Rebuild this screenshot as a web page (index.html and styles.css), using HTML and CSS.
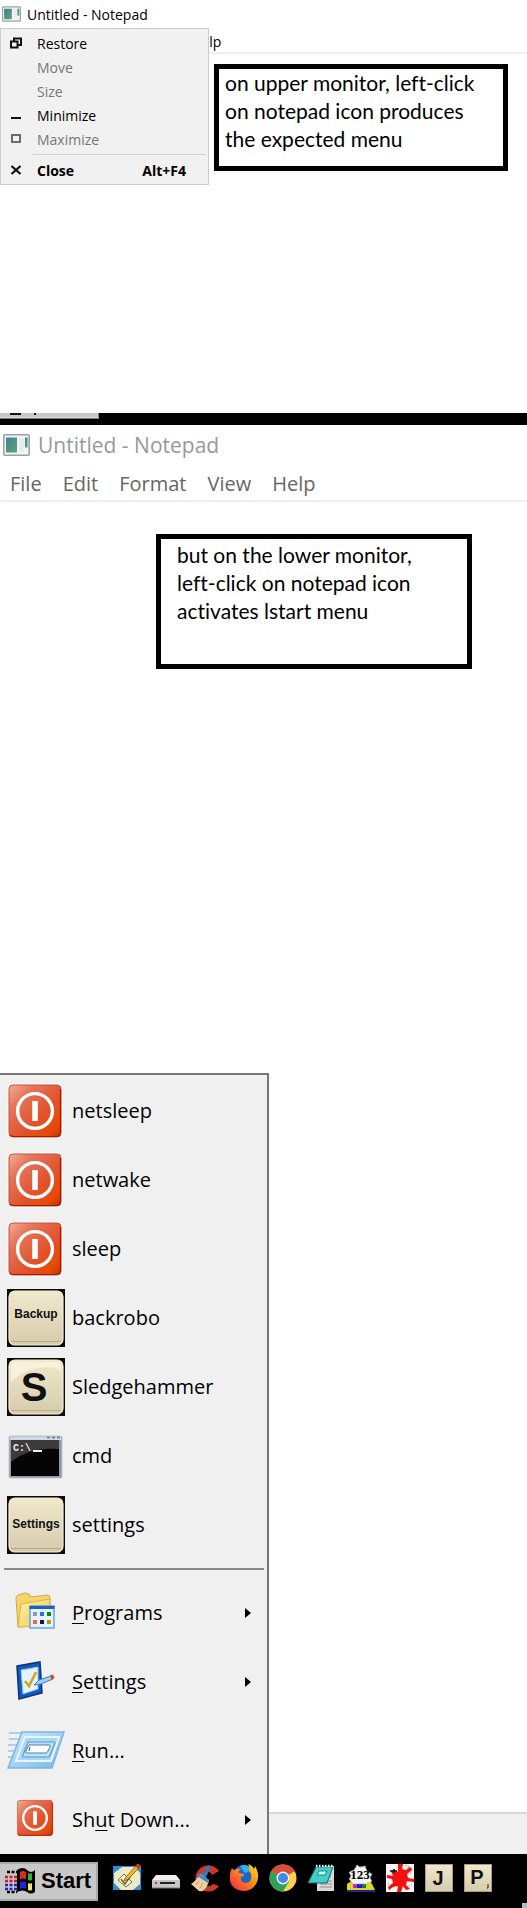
FILE: index.html
```html
<!DOCTYPE html>
<html lang="en">
<head>
<meta charset="utf-8">
<title>Untitled - Notepad</title>
<link rel="stylesheet" href="styles.css">
</head>
<body>
<svg class="defs" aria-hidden="true">
  <defs>
    <linearGradient id="red" x1="0" y1="0" x2="1" y2="1">
      <stop offset="0" stop-color="#f5ad99"/><stop offset=".25" stop-color="#e4755a"/><stop offset=".6" stop-color="#e2522c"/><stop offset=".85" stop-color="#e64a06"/><stop offset="1" stop-color="#c43000"/>
    </linearGradient>
    <linearGradient id="tile" x1="0" y1="0" x2="0" y2="1">
      <stop offset="0" stop-color="#f1e8cd"/><stop offset="1" stop-color="#d6cbac"/>
    </linearGradient>
    <linearGradient id="teal" x1="0" y1="0" x2="1" y2="1">
      <stop offset="0" stop-color="#3f8296"/><stop offset="1" stop-color="#58a873"/>
    </linearGradient>
    <linearGradient id="folder" x1="0" y1="0" x2="1" y2="1">
      <stop offset="0" stop-color="#fff4a8"/><stop offset="1" stop-color="#efc452"/>
    </linearGradient>
    <linearGradient id="sky" x1="0" y1="0" x2="1" y2="1">
      <stop offset="0" stop-color="#d5edfb"/><stop offset="1" stop-color="#6fb9ea"/>
    </linearGradient>
    <linearGradient id="fox" x1="1" y1="0" x2="0" y2="1">
      <stop offset="0" stop-color="#ffe226"/><stop offset=".45" stop-color="#ff8a16"/><stop offset="1" stop-color="#f0204e"/>
    </linearGradient>
    <symbol id="app" viewBox="0 0 27 22">
      <rect x=".8" y=".8" width="25.4" height="20.4" rx="1" fill="#f3f4f6" stroke="#9aa1ab" stroke-width="1.6"/>
      <rect x="3" y="3.5" width="11" height="15" fill="url(#teal)"/>
      <rect x="16" y="4" width="5" height="14" fill="#e9ebee"/>
      <rect x="22" y="3.5" width="2.6" height="10" fill="url(#teal)"/>
    </symbol>
    <symbol id="power" viewBox="0 0 56 56">
      <rect x="0" y="0" width="56" height="56" rx="6" fill="#fafafa"/>
      <rect x="2" y="2" width="52" height="52" rx="4" fill="url(#red)" stroke="#c9513a"/>
      <path d="M3 52q1 1.500 4 1.500h42q4.500 0 4.500-4.500V6" fill="none" stroke="#a51a00" stroke-width="1.200"/>
      <circle cx="28" cy="28" r="17.4" fill="none" stroke="#fff" stroke-width="3.4"/>
      <rect x="25.2" y="18" width="5.6" height="20" fill="#fff"/>
    </symbol>
    <symbol id="keycap" viewBox="0 0 58 58">
      <rect width="58" height="58" fill="#0b0b08"/>
      <rect x="2" y="2" width="54" height="54" rx="6" fill="url(#tile)" stroke="#f6efd6" stroke-width="1.2"/>
      <path d="M4 52.5h50" stroke="#b5ab8d"/>
    </symbol>
  </defs>
</svg>

<main class="desktop">
  <section class="window window-upper">
    <header class="titlebar">
      <svg class="app-icon"><use href="#app"/></svg>
      <h1 class="title">Untitled - Notepad</h1>
    </header>
    <nav class="menubar">
      <button>Help</button>
    </nav>
    <p class="note note-upper">on upper monitor, left-click<br>on notepad icon produces<br>the expected menu</p>

    <div class="sysmenu" role="menu">
      <button class="sysitem" role="menuitem">
        <svg viewBox="0 0 12 12"><path d="M1 4.500h6.500v6H1zM4 4V1.500h7V8H8" fill="none" stroke="#111" stroke-width="2"/></svg>
        <span>Restore</span>
      </button>
      <button class="sysitem" role="menuitem" disabled><span class="blank"></span><span>Move</span></button>
      <button class="sysitem" role="menuitem" disabled><span class="blank"></span><span>Size</span></button>
      <button class="sysitem" role="menuitem">
        <svg viewBox="0 0 12 12"><path d="M1 9h10" stroke="#111" stroke-width="2"/></svg>
        <span>Minimize</span>
      </button>
      <button class="sysitem" role="menuitem" disabled>
        <svg viewBox="0 0 12 12"><path d="M2 2h8v7H2z" fill="none" stroke="#6d6d6d" stroke-width="2"/></svg>
        <span>Maximize</span>
      </button>
      <hr class="sysline">
      <button class="sysitem sysclose" role="menuitem">
        <svg viewBox="0 0 12 12"><path d="M1.500 2l9 8M10.500 2l-9 8" stroke="#111" stroke-width="2.200"/></svg>
        <span>Close</span><span class="shortcut">Alt+F4</span>
      </button>
    </div>
  </section>

  <div class="divider">
    <svg class="divider-button" viewBox="0 0 99 6"><path d="M0 0h98v5H0z" fill="#c8c8c8"/><path d="M0 5h99V0" fill="none" stroke="#eee"/><path d="M10 1h11M13 0h5M35 0v2" stroke="#111" stroke-width="2"/></svg>
  </div>

  <section class="window window-lower">
    <header class="titlebar">
      <svg class="app-icon"><use href="#app"/></svg>
      <h2 class="title">Untitled - Notepad</h2>
    </header>
    <nav class="menubar">
      <button>File</button><button>Edit</button><button>Format</button><button>View</button><button>Help</button>
    </nav>
    <p class="note note-lower">but on the lower monitor,<br>left-click on notepad icon<br>activates lstart menu</p>
    <footer class="statusbar"></footer>

    <div class="startmenu" role="menu">
      <button class="startitem" role="menuitem"><svg class="pic" viewBox="0 0 58 58"><use href="#power" x="0" y="1" width="56" height="56"/></svg><span>netsleep</span></button>
      <button class="startitem" role="menuitem"><svg class="pic" viewBox="0 0 58 58"><use href="#power" x="0" y="1" width="56" height="56"/></svg><span>netwake</span></button>
      <button class="startitem" role="menuitem"><svg class="pic" viewBox="0 0 58 58"><use href="#power" x="0" y="1" width="56" height="56"/></svg><span>sleep</span></button>
      <button class="startitem" role="menuitem"><svg class="pic" viewBox="0 0 58 58"><use href="#keycap" width="58" height="58"/><text class="cap cap-word" x="29" y="29">Backup</text></svg><span>backrobo</span></button>
      <button class="startitem" role="menuitem"><svg class="pic" viewBox="0 0 58 58"><use href="#keycap" width="58" height="58"/><path d="M4 24Q28 2 54 12V8q0-4-4-4H8Q4 4 4 8z" fill="#fffbe9" opacity=".6"/><text class="cap cap-letter" x="27" y="43">S</text></svg><span>Sledgehammer</span></button>
      <button class="startitem" role="menuitem">
        <svg class="pic" viewBox="0 0 58 58">
          <rect x="2" y="9" width="53" height="42" rx="1.500" fill="#8e97a5" stroke="#c3c8d0"/>
          <rect x="3" y="9.500" width="51" height="3.500" fill="#cfd8e6"/>
          <path d="M40 10.500h3M45 10.500h3M50 10.500h3" stroke="#68758b" stroke-width="1.500"/>
          <rect x="4" y="13" width="48" height="36" fill="#050505"/>
          <path d="M4 13h48v9Q22 20 4 35z" fill="#3b3b3b"/>
          <text class="prompt" x="6" y="24">C:\</text>
          <path d="M26 24h9" stroke="#eee" stroke-width="2"/>
        </svg><span>cmd</span></button>
      <button class="startitem" role="menuitem"><svg class="pic" viewBox="0 0 58 58"><use href="#keycap" width="58" height="58"/><text class="cap cap-word" x="29" y="32">Settings</text></svg><span>settings</span></button>
      <hr class="startline">
      <button class="startitem" role="menuitem">
        <svg class="pic" viewBox="0 0 58 58">
          <path d="M11 43L9 14q0-2 2-3l7-2 4 1 2 3 16-2q3 0 3 3v27z" fill="#f4d56c" stroke="#d6a83a"/>
          <path d="M11 43l3-23 29-5v4l-3 23z" fill="url(#folder)" stroke="#dfb348"/>
          <rect x="23" y="22" width="24" height="22" fill="#e8f2fe" stroke="#4d9be4" stroke-width="1.300"/>
          <path d="M22.500 23.500h25" stroke="#1b5fc9" stroke-width="3"/>
          <g stroke-width="4"><path d="M26 30h4" stroke="#9b90c8"/><path d="M33 30h4" stroke="#1c78dc"/><path d="M40 30h4" stroke="#10850f"/><path d="M26 38h4" stroke="#f06a38"/><path d="M33 38h4" stroke="#10107c"/><path d="M40 38h4" stroke="#c5960c"/></g>
        </svg><span><u>P</u>rograms</span><svg class="arrow" viewBox="0 0 6 10"><path d="M0 0l6 5-6 5z"/></svg></button>
      <button class="startitem" role="menuitem">
        <svg class="pic" viewBox="0 0 58 58">
          <path d="M10 13l23-4 2 31-23 6z" fill="#1258bd" stroke="#08357e" stroke-width="1.500"/>
          <path d="M14 17l17-3v22l-15 5z" fill="#e6f2ff" stroke="#8cc0f5"/>
          <path d="M18 28l4 5 7-14" fill="none" stroke="#d4a419" stroke-width="2.600"/>
          <path d="M27 32l5-5 12-4 2 3-12 5z" fill="#9bcdf5" stroke="#3f80c2"/>
          <path d="M43 22.500l3-1 1.500 3.500-3 1.500z" fill="#d6452a"/>
        </svg><span><u>S</u>ettings</span><svg class="arrow" viewBox="0 0 6 10"><path d="M0 0l6 5-6 5z"/></svg></button>
      <button class="startitem" role="menuitem">
        <svg class="pic" viewBox="0 0 58 58">
          <path d="M2 11h14M2 17h11M1 23h10M1 29h8M1 35h6" stroke="#a9d2f0" stroke-width="2"/>
          <path d="M15 10h42L45 46H1z" fill="url(#sky)" stroke="#80b4dd" stroke-width="1.500"/>
          <path d="M18 15h34l-8 24H9z" fill="#a9d8f7" stroke="#e9f6fe" stroke-width="2"/>
          <path d="M21 20h26q1 0 1 1l-5 12q-1 2-2 2H17q-2 0-1-2z" fill="#bfe0f9" stroke="#5c97cb" stroke-width="1.200"/>
          <path d="M22 23h20q2 0 1 2l-2 4q-1 2-2 2H20q-2 0-1-2z" fill="#fff" stroke="#517aa6"/>
          <path d="M23 25l-1 4" stroke="#555"/>
        </svg><span><u>R</u>un...</span></button>
      <button class="startitem" role="menuitem"><svg class="pic" viewBox="0 0 58 58"><use href="#power" x="9" y="8" width="38" height="38"/></svg><span>Sh<u>u</u>t Down...</span><svg class="arrow" viewBox="0 0 6 10"><path d="M0 0l6 5-6 5z"/></svg></button>
    </div>
  </section>

  <footer class="taskbar">
    <button class="startbutton">
      <svg class="flag" viewBox="0 0 32 28">
        <path d="M12 3q6-4 10 0t8 0v22q-4 3-8 0t-10 0z" fill="#000"/>
        <path d="M15 5q3-2 6 0v7q-3-1-6 0z" fill="#e22a1c"/><path d="M23 6q2 1 4 0v7q-2 1-4 0z" fill="#36b336"/>
        <path d="M15 15q3-1 6 0v7q-3-2-6 0z" fill="#2424e0"/><path d="M23 16q2 1 4 0v7q-2 1-4 0z" fill="#efe65c"/>
        <g stroke-width="2.500" stroke-dasharray="3 1.500"><path d="M2 5h10M2 25h10" stroke="#000"/><path d="M0 10h12M0 14h12" stroke="#c81e2c"/><path d="M0 18h12M0 22h12" stroke="#2222c4"/></g>
      </svg>
      <span>Start</span>
    </button>
    <div class="quicklaunch">
      <button aria-label="Notes"><svg viewBox="0 0 28 28">
        <path d="M0 2h28v24H0z" fill="#2d8edb"/><path d="M9 3h13l5 6v11l-7 6H8l-7-7V9z" fill="#eee9c5"/><path d="M5 16l6-6 8 8-6 5z" fill="#f9f6df" stroke="#706c55"/><path d="M8 15l4 5 11-16" fill="none" stroke="#6f6123" stroke-width="1.500"/><path d="M12 14L23 2l3 2-11 11-4 2z" fill="#f2bd24" stroke="#79520c" stroke-width=".8"/><path d="M22 2l3-3 3 3-3 3z" fill="#d3311f"/></svg></button>
      <button aria-label="Drive"><svg viewBox="0 0 28 28">
        <path d="M4 11h20l4 5H0z" fill="#f2f2f2"/><path d="M0 16h28v8H0z" fill="#c6c6c6"/><path d="M8 19h15" stroke="#222" stroke-width="2"/><path d="M3 19h2" stroke="#c33" stroke-width="2"/><path d="M0 24h28" stroke="#777"/></svg></button>
      <button aria-label="CCleaner"><svg viewBox="0 0 28 28">
        <path d="M28 7A13 13 0 1 0 28 22l-6-2q-4 4-8 1-4-3-3-8 2-7 8-5l2 3z" fill="#cf3528"/><path d="M17 1l3 2-5 10 1 2-7-5 4-2z" fill="#2d7bb8"/><path d="M9 10l9 6q-1 6-5 10-2 2-5 1L0 20q5-3 9-10z" fill="#efcfa0"/><path d="M8 10l10 6-1 3-11-7z" fill="#3c8bc2"/><path d="M5 21l3-4M9 24l3-5" stroke="#c59a63"/></svg></button>
      <button aria-label="Firefox"><svg viewBox="0 0 28 28">
        <circle cx="14" cy="13" r="12" fill="#1b65c9"/><path d="M10 2q7-3 12 4l-7 3z" fill="#31b4ee"/><path d="M2 4q1 2 3 2 3-2 6-1-3 2-2 4l5 1q1 2-3 3-1 5 4 6 5 0 6-4 1-5-2-8 1-5-1-7 4 1 6 5l1-3q5 8 2 16-4 9-13 9T1 20Q-2 12 2 4z" fill="url(#fox)"/></svg></button>
      <button aria-label="Chrome"><svg viewBox="0 0 28 28">
        <circle cx="14" cy="14" r="13.500" fill="#fdd04b"/><path d="M14 14L2.300 7.300A13.500 13.500 0 0 0 14 27.500L20 17.500z" fill="#2ea358"/><path d="M14 14L2.300 7.300a13.500 13.500 0 0 1 23.400 0z" fill="#dc4a3b"/><path d="M14 8h12.200l-.5-.7H14z" fill="#dc4a3b"/><circle cx="14" cy="14" r="6.500" fill="#f3f3f3"/><circle cx="14" cy="14" r="5" fill="#4488ef"/></svg></button>
      <button aria-label="Notepad"><svg viewBox="0 0 28 28">
        <path d="M15 2h11v25H9V14z" fill="#dadada"/><path d="M12 17h12M12 20h12M12 23h12M22 8v6" stroke="#8d8d8d"/><path d="M8 3h17l-6 16H0z" fill="#3fd0c8" stroke="#176b69"/><path d="M11 7h8l-2 4H9z" fill="#d7fffa" stroke="#168784"/><path d="M8 2h18" stroke="#eee" stroke-width="2.500" stroke-dasharray="1.500 1.500"/></svg></button>
      <button aria-label="Number wizard"><svg viewBox="0 0 28 28">
        <path d="M0 20l6-4h17l5 10H0z" fill="#e0d61b"/><path d="M6 19h4v5H6z" fill="#d51bd5"/><path d="M10 19h5v5h-5z" fill="#1c1ce0"/><path d="M15 19h4v5h-4z" fill="#167b2b"/><path d="M0 27h28" stroke="#1e1ea8" stroke-width="2"/><path d="M10 1l3 2 5-1 2 5 5 3-2 4 2 3-6 3H6l-4-5 2-3-2-4 5-2z" fill="#f5f5f5" stroke="#999" stroke-dasharray="2 2"/><text class="mini" x="13" y="15">123</text></svg></button>
      <button aria-label="Red splat"><svg viewBox="0 0 28 28">
        <path d="M0 0h28v28H0z" fill="#f5f5f5"/><path d="M19 1l7 3-2 7M2 20l6 1-5 5M20 24l6-4M22 3v7" stroke="#aaa" fill="none" stroke-dasharray="2 1"/><path d="M12 0h5l-1 5 4 1 4-3 2 3-5 4 1 4 6 1v3l-7-1-1 4 4 4-4 1-3-4-2 6h-4l1-6-5 1-4 3-1-3 5-4-1-4-5-1v-3l6 1-2-5 3-1 4 2z" fill="#f50f0f"/><path d="M4 7h7M8 5v4" fill="none" stroke="#111" stroke-width="1.500"/></svg></button>
      <button aria-label="J"><svg viewBox="0 0 28 28"><rect width="28" height="28" fill="#a69d82"/><rect x="1" y="1" width="26" height="26" fill="url(#tile)"/><text class="cap cap-small" x="13" y="21">J</text></svg></button>
      <button aria-label="P"><svg viewBox="0 0 28 28"><rect width="28" height="28" fill="#a69d82"/><rect x="1" y="1" width="26" height="26" fill="url(#tile)"/><text class="cap cap-small" x="13" y="20">P</text><path d="M24 20v4h-1" stroke="#222" fill="none"/></svg></button>
    </div>
    <span class="tray-edge"></span>
  </footer>
</main>
</body>
</html>
```
FILE: styles.css
```css
* { box-sizing: border-box; }

body {
  margin: 0;
  background: #fff;
  color: #000;
  font-family: "Open Sans", "Noto Sans", sans-serif;
}

button {
  margin: 0;
  padding: 0;
  border: 0;
  background: none;
  color: inherit;
  font: inherit;
  text-align: left;
}

.defs { position: absolute; width: 0; height: 0; }

.desktop {
  display: flex;
  flex-direction: column;
  min-height: 100vh;
}

.window {
  position: relative;
  display: flex;
  flex-direction: column;
  background: #fff;
}

.titlebar { display: flex; align-items: center; }
.title { margin: 0; font-size: inherit; font-weight: 400; }
.menubar { display: flex; align-items: center; border-bottom: 2px solid #f0f0f0; }
.app-icon { flex: none; }

.window-upper { min-height: 413px; font-size: 14px; }
.window-upper .titlebar { height: 28px; padding-left: 2px; gap: 6px; }
.window-upper .app-icon { width: 19px; height: 16px; }
.window-upper .menubar { height: 26px; padding: 2px 0 0 191px; }

.window-lower { flex: 1; font-size: 20px; }
.window-lower .titlebar { height: 40px; padding-left: 3px; gap: 8px; color: #999; font-size: 21px; }
.window-lower .app-icon { width: 27px; height: 22px; }
.window-lower .menubar { height: 37px; padding: 2px 0 0 10px; gap: 21px; color: #666; }

.note {
  margin: 0;
  border: 5px solid #000;
  background: #fff;
  font-family: Lato, sans-serif;
  font-size: 21px;
  font-variant-ligatures: none;
  line-height: 28px;
}
.note-upper { width: 294px; min-height: 107px; margin: 10px 0 0 214px; padding: 0 6px; }
.note-lower { width: 316px; min-height: 135px; margin: 32px 0 0 156px; padding: 2px 16px; }

.sysmenu {
  position: absolute;
  top: 28px;
  left: 0;
  display: flex;
  flex-direction: column;
  width: 209px;
  padding: 2px;
  border: 1px solid #ccc;
  background: #f1f1f1;
}
.sysitem {
  display: flex;
  align-items: center;
  gap: 15px;
  height: 24px;
  padding-left: 7px;
}
.sysitem:disabled { color: #777; }
.sysitem svg, .blank { flex: none; width: 12px; height: 12px; }
.sysline { width: 173px; height: 1px; margin: 3px 0 3px auto; border: 0; background: #d0d0d0; }
.sysclose { font-weight: 700; }
.shortcut { margin-left: auto; padding-right: 20px; }

.divider { height: 12px; background: #000; }
.divider-button { display: block; width: 99px; height: 6px; }

.statusbar { height: 42px; margin-top: auto; border-top: 2px solid #d9d9d9; background: #f0f0f0; }

.startmenu {
  position: absolute;
  bottom: 0;
  left: 0;
  display: flex;
  flex-direction: column;
  width: 269px;
  padding-top: 1px;
  border-top: 2px solid #777;
  border-right: 2px solid #777;
  background: #f0f0f0;
}
.startitem {
  display: flex;
  align-items: center;
  height: 69px;
  padding: 0 16px 0 7px;
  gap: 7px;
}
.pic { flex: none; width: 58px; height: 58px; }
.arrow { width: 6px; height: 10px; margin-left: auto; }
.startline { width: 260px; height: 2px; margin: 9px 0 8px 4px; border: 0; background: #888; }
.startitem u { text-decoration-thickness: 1px; text-underline-offset: 3px; }

.cap { font-family: "Liberation Sans", sans-serif; font-weight: 700; text-anchor: middle; fill: #111; }
.cap-word { font-size: 12px; }
.cap-letter { font-size: 40px; }
.cap-small { font-size: 20px; }
.prompt { font-family: "Liberation Mono", monospace; font-size: 10px; font-weight: 700; fill: #eee; }
.mini { font-family: "Liberation Serif", serif; font-size: 13px; font-weight: 700; text-anchor: middle; fill: #000; }

.taskbar {
  display: flex;
  align-items: center;
  height: 54px;
  gap: 15px;
  background: #000;
}
.startbutton {
  display: flex;
  align-items: center;
  width: 98px;
  height: 39px;
  padding-left: 5px;
  gap: 4px;
  border: 2px solid #aaa;
  border-left: 0;
  background: #c8c8c8;
  font-family: "Liberation Sans", sans-serif;
  font-size: 22px;
  font-weight: 700;
}
.flag { flex: none; width: 32px; height: 28px; }
.quicklaunch { display: flex; gap: 11px; padding-bottom: 6px; }
.quicklaunch button { width: 28px; height: 28px; }
.quicklaunch svg { display: block; width: 28px; height: 28px; }
.tray-edge { align-self: flex-end; width: 5px; height: 5px; margin-left: auto; background: #a9bcc4; }
```
